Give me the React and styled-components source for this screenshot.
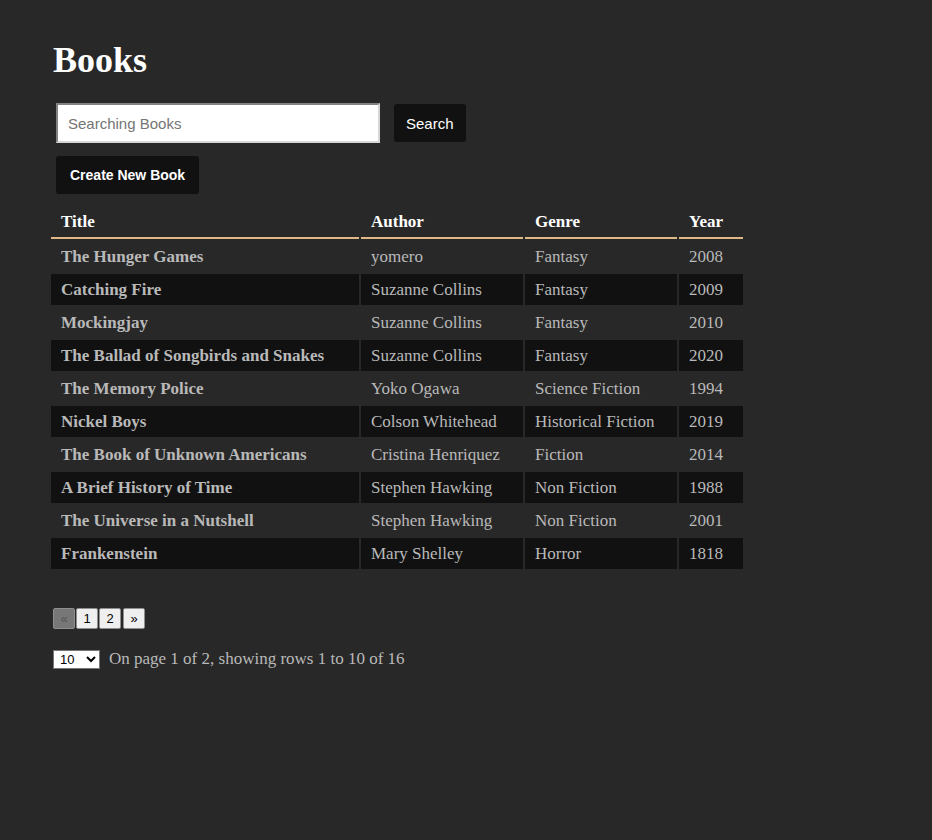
import React, { useState } from 'react'
import styled, { createGlobalStyle } from 'styled-components'

const GlobalStyle = createGlobalStyle`
body{
  margin:0;
  background-color:#282828;
  font-family:"Liberation Serif", "Times New Roman", serif;
}
`
const Page = styled.main`
  padding:38px 0 0 51px;
  min-height:840px;
  box-sizing:border-box;
`
const Heading = styled.h1`
  margin:0 0 21px 2px;
  font-size:36px;
  line-height:44px;
  font-weight:bold;
  color:#fff;
`
const SearchRow = styled.form`
  display:flex;
  align-items:center;
  gap:14px;
  margin-left:5px;
`
const SearchInput = styled.input`
  box-sizing:border-box;
  width:324px;
  height:40px;
  padding:0 10px;
  border:2px inset #d6d6d6;
  background:#fff;
  font-family:"Liberation Sans", Arial, sans-serif;
  font-size:15px;
  outline:none;
  &::placeholder{ color:#757575; }
`
const DarkButton = styled.button`
  box-sizing:border-box;
  height:38px;
  padding:0 ${p => p.bold ? '14px' : '12px'};
  border:none;
  border-radius:3px;
  background:#111;
  color:#fff;
  font-family:"Liberation Sans", Arial, sans-serif;
  font-size:${p => p.bold ? '14px' : '15px'};
  font-weight:${p => p.bold ? 'bold' : 'normal'};
  cursor:pointer;
`
const CreateRow = styled.div`
  margin:13px 0 0 5px;
`
const Table = styled.table`
  margin-top:11px;
  border-spacing:2px;
  margin-left:-2px;
  table-layout:fixed;
`
const Th = styled.th`
  width:${p => p.w}px;
  box-sizing:border-box;
  padding:5px 10px 5px;
  text-align:left;
  color:#fff;
  font-size:17px;
  font-weight:bold;
  border-bottom:2px solid #deb887;
`
const Row = styled.tr`
  background:${p => p.dark ? '#111' : 'transparent'};
`
const Td = styled.td`
  height:31px;
  box-sizing:border-box;
  padding:0 10px;
  color:#b9b9b9;
  font-size:17px;
  font-weight:${p => p.bold ? 'bold' : 'normal'};
  white-space:nowrap;
`
const Pager = styled.div`
  display:flex;
  gap:1px;
  margin:37px 0 0 2px;
`
const PageButton = styled.button`
  box-sizing:border-box;
  width:22px;
  height:21px;
  padding:0;
  border:1px solid #8f8f8f;
  border-radius:2px;
  background:${p => p.disabled ? '#777' : '#efefef'};
  color:${p => p.disabled ? '#555' : '#000'};
  font-family:"Liberation Sans", Arial, sans-serif;
  font-size:13px;
  margin-right:${p => p.gap ? '1px' : '0'};
`
const Footer = styled.div`
  display:flex;
  align-items:center;
  gap:9px;
  margin:20px 0 0 2px;
  color:#b9b9b9;
  font-size:17px;
`
const SizeSelect = styled.select`
  width:47px;
  height:19px;
  padding:0 0 0 2px;
  border:1px solid #767676;
  border-radius:0;
  background:#fff;
  font-family:"Liberation Sans", Arial, sans-serif;
  font-size:13px;
`

const books = [
  ['The Hunger Games', 'yomero', 'Fantasy', 2008],
  ['Catching Fire', 'Suzanne Collins', 'Fantasy', 2009],
  ['Mockingjay', 'Suzanne Collins', 'Fantasy', 2010],
  ['The Ballad of Songbirds and Snakes', 'Suzanne Collins', 'Fantasy', 2020],
  ['The Memory Police', 'Yoko Ogawa', 'Science Fiction', 1994],
  ['Nickel Boys', 'Colson Whitehead', 'Historical Fiction', 2019],
  ['The Book of Unknown Americans', 'Cristina Henriquez', 'Fiction', 2014],
  ['A Brief History of Time', 'Stephen Hawking', 'Non Fiction', 1988],
  ['The Universe in a Nutshell', 'Stephen Hawking', 'Non Fiction', 2001],
  ['Frankenstein', 'Mary Shelley', 'Horror', 1818],
]

const App = () => {
  const [size, setSize] = useState('10')
  return (
    <Page>
      <GlobalStyle />
      <Heading>Books</Heading>
      <SearchRow onSubmit={e => e.preventDefault()}>
        <SearchInput placeholder='Searching Books' />
        <DarkButton type='submit'>Search</DarkButton>
      </SearchRow>
      <CreateRow>
        <DarkButton bold>Create New Book</DarkButton>
      </CreateRow>
      <Table>
        <thead>
          <tr>
            <Th w={308}>Title</Th>
            <Th w={162}>Author</Th>
            <Th w={152}>Genre</Th>
            <Th w={64}>Year</Th>
          </tr>
        </thead>
        <tbody>
          {books.map((b, i) => (
            <Row key={b[0]} dark={i % 2 === 1}>
              <Td bold>{b[0]}</Td>
              <Td>{b[1]}</Td>
              <Td>{b[2]}</Td>
              <Td>{b[3]}</Td>
            </Row>
          ))}
        </tbody>
      </Table>
      <Pager>
        <PageButton disabled>«</PageButton>
        <PageButton>1</PageButton>
        <PageButton gap>2</PageButton>
        <PageButton>»</PageButton>
      </Pager>
      <Footer>
        <SizeSelect value={size} onChange={e => setSize(e.target.value)}>
          <option>10</option>
          <option>20</option>
          <option>50</option>
        </SizeSelect>
        On page 1 of 2, showing rows 1 to 10 of 16
      </Footer>
    </Page>
  )
}

export default App
